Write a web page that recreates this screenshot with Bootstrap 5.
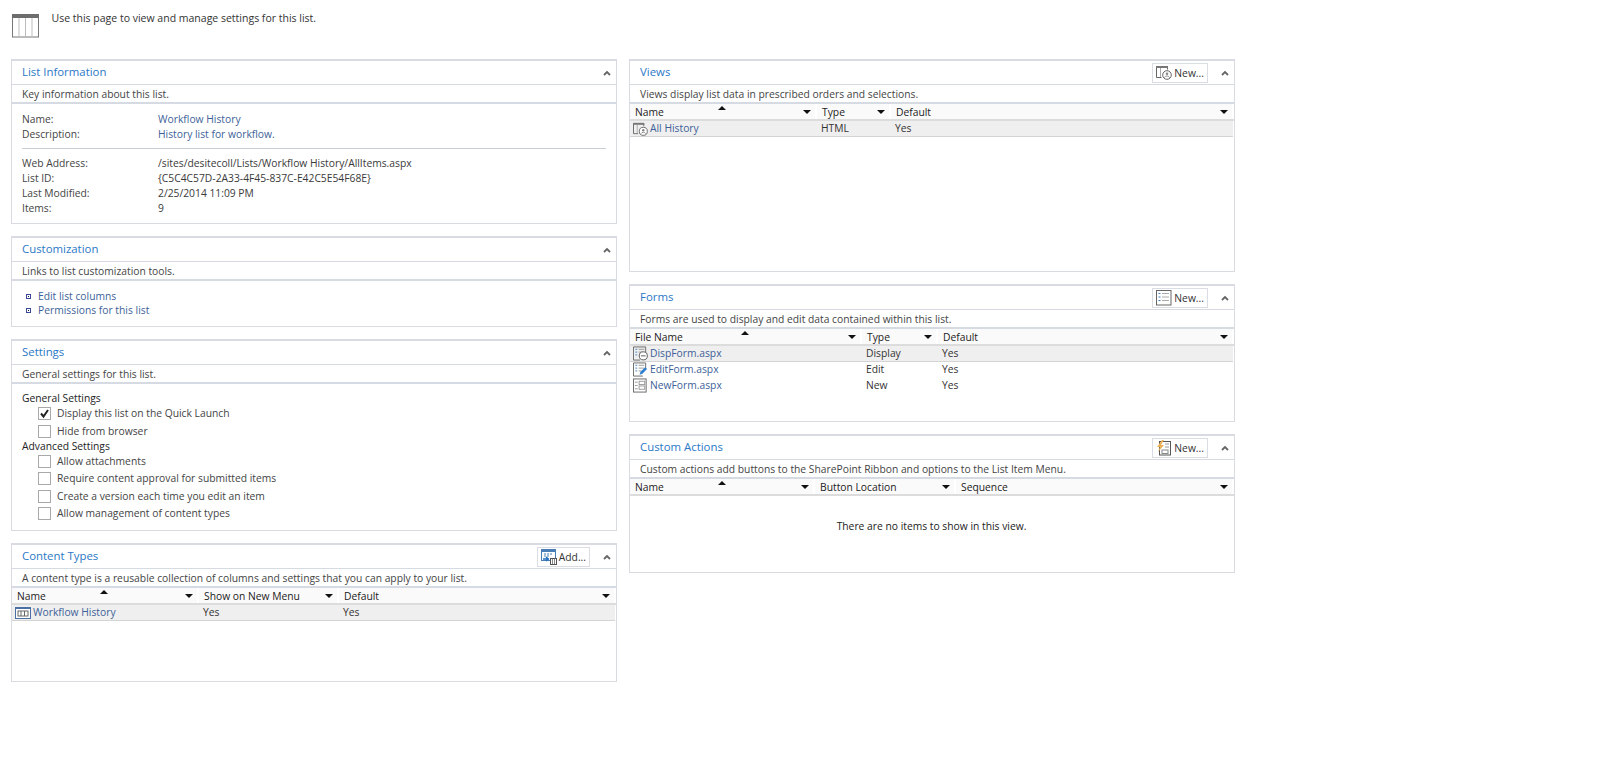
<!DOCTYPE html>
<html lang="en"><head><meta charset="utf-8"><title>List Settings</title>
<link rel="stylesheet" href="https://cdn.jsdelivr.net/npm/bootstrap@5.3.0/dist/css/bootstrap.min.css">
<style>
body{font-family:"Open Sans","Noto Sans",sans-serif;font-size:10.3px;color:#444;background:#fff;line-height:15px}
a{color:#3d5f98;text-decoration:none}
.page-wrap{width:1240px;padding:0 0 0 11px}
.intro{height:59px;padding-top:11px;gap:12.5px;padding-left:1px}
.intro p{margin:0;color:#333;font-size:10.5px;line-height:14px;width:280px}
.intro svg{flex:none;margin-top:3px}
.cols{gap:12px;align-items:flex-start}
.col-pane{width:606px;gap:12px}
.pane{border:1px solid #d8dbe1;border-top-width:2px;background:#fff}
.h-info{height:165px}.h-cust{height:91px}.h-set{height:192px}.h-ct{height:139px}
.h-views{height:213px}.h-forms{height:138px}.h-act{height:139px}
.pane-head{height:24px;border-bottom:1px solid #d5dae3;padding:0 5px 0 10px}
.pane-title{font-size:11.4px;color:#2a78c6;margin:0 0 2px;font-weight:400;line-height:20px}
.pane-desc{height:19px;border-bottom:2px solid #d5dae3;padding:2px 10px 0;line-height:14px;color:#444}
.new-btn{height:20px;border:1px solid #dadde3;background:#fff;padding:0 3px;font-size:10.3px;line-height:14px;color:#333;border-radius:0;margin-right:13px;gap:2px}
.chev{flex:none}
.dl-row{height:15px;padding:0 10px}
.dl-row span:first-child{width:136px;flex:none}
.dl-row span:last-child{color:#3a3a3a}
.dl-first{padding-top:7.5px}
.dl-first .dl-row{height:15.5px}
.dl-rule{border-top:1px solid #c9ced8;margin:5px 10px 7px}
.link-list{padding:8px 0 0 14px;margin:0;list-style:none}
.link-list li{height:14.5px;gap:7px}
.bullet{width:5px;height:5px;border:1px solid #3a4a9a;background:#fff;flex:none;position:relative}
.bullet::after{content:"";position:absolute;left:1px;top:1px;width:1px;height:1px;background:#223}
.set-wrap{padding:7px 10px 0}
.set-head{color:#222;height:14px;line-height:14px}
.set-head-tight{height:12.5px;line-height:12px}
.set-row{height:17.5px;padding-left:16px;gap:6px}
.cbox{width:13px;height:13px;border:1px solid #a9a9a9;background:#fff;flex:none}
.cbox svg{display:block}
.list-table{table-layout:fixed;margin:0;width:604px;font-size:10.3px;color:#333;--bs-table-bg:transparent}
.list-table th,.list-table td{padding:0 0 0 5px;border:0;height:16px;line-height:15px;vertical-align:middle}
.list-table th{font-weight:400;color:#222;background:#fbfafa;border-bottom:2px solid #dcdcdc;border-right:2px solid #fff;position:relative;height:16px;padding-top:1px;line-height:14px}
.list-table td:first-child{padding-left:3px}
.list-table tr.sel td{background:#efefef;border-bottom:1px solid #d4d4d4}
.list-table tr.plain td{background:#fff;border:0}
.down{position:absolute;right:4px;top:6px;width:0;height:0;border-left:4px solid transparent;border-right:4px solid transparent;border-top:4px solid #111}
.up{position:absolute;top:2px;width:0;height:0;border-left:4px solid transparent;border-right:4px solid transparent;border-bottom:4px solid #111}
.up-name{left:88px}.up-file{left:111px}
.cell-ic{gap:2px}
.cell-ic svg{flex:none}
.list-table tr.plain td.empty{padding:23px 0 0;color:#222;text-align:center}
</style></head><body>
<div class="page-wrap">
<div class="intro d-flex">
<svg width="27" height="24" viewBox="0 0 27 24"><rect x=".5" y=".5" width="26" height="22.500" fill="#fff" stroke="#777"/><rect x="0" y="0" width="27" height="4" fill="#6d6d6d"/><path d="M7 4v19M13.500 4v19M20 4v19" stroke="#bdbdbd"/></svg>
<p>Use this page to view and manage settings for this list.</p>
</div>
<div class="cols d-flex">
<div class="col-pane d-flex flex-column">

<section class="pane h-info">
<div class="pane-head d-flex align-items-center justify-content-between"><h2 class="pane-title">List Information</h2><svg class="chev" width="8" height="6" viewBox="0 0 8 6"><path d="M1 5l3-3 3 3" fill="none" stroke="#666" stroke-width="1.800"/></svg></div>
<div class="pane-desc">Key information about this list.</div>
<div class="dl-first">
<div class="dl-row d-flex"><span>Name:</span><span><a href="#">Workflow History</a></span></div>
<div class="dl-row d-flex"><span>Description:</span><span><a href="#">History list for workflow.</a></span></div>
</div>
<div class="dl-rule"></div>
<div class="dl-row d-flex"><span>Web Address:</span><span>/sites/desitecoll/Lists/Workflow History/AllItems.aspx</span></div>
<div class="dl-row d-flex"><span>List ID:</span><span>{C5C4C57D-2A33-4F45-837C-E42C5E54F68E}</span></div>
<div class="dl-row d-flex"><span>Last Modified:</span><span>2/25/2014 11:09 PM</span></div>
<div class="dl-row d-flex"><span>Items:</span><span>9</span></div>
</section>

<section class="pane h-cust">
<div class="pane-head d-flex align-items-center justify-content-between"><h2 class="pane-title">Customization</h2><svg class="chev" width="8" height="6" viewBox="0 0 8 6"><path d="M1 5l3-3 3 3" fill="none" stroke="#666" stroke-width="1.800"/></svg></div>
<div class="pane-desc">Links to list customization tools.</div>
<ul class="link-list">
<li class="d-flex align-items-center"><span class="bullet"></span><a href="#">Edit list columns</a></li>
<li class="d-flex align-items-center"><span class="bullet"></span><a href="#">Permissions for this list</a></li>
</ul>
</section>

<section class="pane h-set">
<div class="pane-head d-flex align-items-center justify-content-between"><h2 class="pane-title">Settings</h2><svg class="chev" width="8" height="6" viewBox="0 0 8 6"><path d="M1 5l3-3 3 3" fill="none" stroke="#666" stroke-width="1.800"/></svg></div>
<div class="pane-desc">General settings for this list.</div>
<div class="set-wrap">
<div class="set-head">General Settings</div>
<div class="set-row d-flex align-items-center"><span class="cbox"><svg width="11" height="11" viewBox="0 0 11 11"><path d="M2 5.500l2.500 3L9 2" fill="none" stroke="#222" stroke-width="2"/></svg></span><span>Display this list on the Quick Launch</span></div>
<div class="set-row d-flex align-items-center"><span class="cbox"></span><span>Hide from browser</span></div>
<div class="set-head set-head-tight">Advanced Settings</div>
<div class="set-row d-flex align-items-center"><span class="cbox"></span><span>Allow attachments</span></div>
<div class="set-row d-flex align-items-center"><span class="cbox"></span><span>Require content approval for submitted items</span></div>
<div class="set-row d-flex align-items-center"><span class="cbox"></span><span>Create a version each time you edit an item</span></div>
<div class="set-row d-flex align-items-center"><span class="cbox"></span><span>Allow management of content types</span></div>
</div>
</section>

<section class="pane h-ct">
<div class="pane-head d-flex align-items-center justify-content-between"><h2 class="pane-title">Content Types</h2>
<div class="d-flex align-items-center"><button type="button" class="btn new-btn d-flex align-items-center"><svg width="16" height="16" viewBox="0 0 16 16"><rect x=".5" y=".5" width="14" height="11" fill="#fff" stroke="#4a7fb5"/><rect y="0" width="15" height="3" fill="#4a7fb5"/><path d="M3 5h2M6 5h2M9 5h2M3 7h2M6 7h2" stroke="#4a7fb5"/><path d="M2 10h5M5 8l2.500 2L5 12" fill="none" stroke="#1f6fc0" stroke-width="1.300"/><rect x="9.500" y="9.500" width="6" height="6" fill="#fff" stroke="#555"/><path d="M11.500 10v5M13.500 10v5" stroke="#888"/></svg>Add...</button><svg class="chev" width="8" height="6" viewBox="0 0 8 6"><path d="M1 5l3-3 3 3" fill="none" stroke="#666" stroke-width="1.800"/></svg></div></div>
<div class="pane-desc">A content type is a reusable collection of columns and settings that you can apply to your list.</div>
<table class="table list-table"><colgroup><col width="186"><col width="140"><col></colgroup>
<thead><tr><th>Name<i class="up up-name"></i><i class="down"></i></th><th>Show on New Menu<i class="down"></i></th><th>Default<i class="down"></i></th></tr></thead>
<tbody><tr class="sel"><td><div class="cell-ic d-flex align-items-center"><svg width="16" height="14" viewBox="0 0 16 14"><rect x=".5" y="1.500" width="15" height="11" fill="#fff" stroke="#4a6fa5"/><rect y="1" width="16" height="2" fill="#4a6fa5"/><rect x="3" y="5" width="10" height="5" fill="#fff" stroke="#666"/><path d="M6 5v5M9.500 5v5" stroke="#666"/></svg><a href="#">Workflow History</a></div></td><td>Yes</td><td>Yes</td></tr></tbody>
</table>
</section>
</div>

<div class="col-pane d-flex flex-column">
<section class="pane h-views">
<div class="pane-head d-flex align-items-center justify-content-between"><h2 class="pane-title">Views</h2>
<div class="d-flex align-items-center"><button type="button" class="btn new-btn d-flex align-items-center"><svg width="16" height="15" viewBox="0 0 16 15"><path d="M.5 1.500h11v3M.5 1.500v11h5" fill="none" stroke="#666"/><rect y="1" width="12" height="2" fill="#777"/><path d="M4.500 3v9" stroke="#aaa"/><circle cx="11" cy="10" r="4.300" fill="#fff" stroke="#666"/><circle cx="11" cy="8.800" r="1.300" fill="#888"/><path d="M8.500 12.500c1-2 4-2 5 0" stroke="#888" fill="none"/></svg>New...</button><svg class="chev" width="8" height="6" viewBox="0 0 8 6"><path d="M1 5l3-3 3 3" fill="none" stroke="#666" stroke-width="1.800"/></svg></div></div>
<div class="pane-desc">Views display list data in prescribed orders and selections.</div>
<table class="table list-table"><colgroup><col width="186"><col width="74"><col></colgroup>
<thead><tr><th>Name<i class="up up-name"></i><i class="down"></i></th><th>Type<i class="down"></i></th><th>Default<i class="down"></i></th></tr></thead>
<tbody><tr class="sel"><td><div class="cell-ic d-flex align-items-center"><svg width="15" height="14" viewBox="0 0 16 15"><path d="M.5 1.500h11v3M.5 1.500v11h5" fill="none" stroke="#666"/><rect y="1" width="12" height="2" fill="#777"/><path d="M4.500 3v9" stroke="#aaa"/><circle cx="11" cy="10" r="4.300" fill="#fff" stroke="#666"/><circle cx="11" cy="8.800" r="1.300" fill="#888"/><path d="M8.500 12.500c1-2 4-2 5 0" stroke="#888" fill="none"/></svg><a href="#">All History</a></div></td><td>HTML</td><td>Yes</td></tr></tbody>
</table>
</section>

<section class="pane h-forms">
<div class="pane-head d-flex align-items-center justify-content-between"><h2 class="pane-title">Forms</h2>
<div class="d-flex align-items-center"><button type="button" class="btn new-btn d-flex align-items-center"><svg width="16" height="16" viewBox="0 0 16 16"><rect x=".5" y=".5" width="14.500" height="14.500" fill="#fff" stroke="#666"/><path d="M2.500 3.500h2M2.500 7h2M2.500 10.500h2" stroke="#3f7fc0"/><path d="M6 3.500h7M6 7h7M6 10.500h7" stroke="#aaa"/></svg>New...</button><svg class="chev" width="8" height="6" viewBox="0 0 8 6"><path d="M1 5l3-3 3 3" fill="none" stroke="#666" stroke-width="1.800"/></svg></div></div>
<div class="pane-desc">Forms are used to display and edit data contained within this list.</div>
<table class="table list-table"><colgroup><col width="231"><col width="76"><col></colgroup>
<thead><tr><th>File Name<i class="up up-file"></i><i class="down"></i></th><th>Type<i class="down"></i></th><th>Default<i class="down"></i></th></tr></thead>
<tbody>
<tr class="sel"><td><div class="cell-ic d-flex align-items-center"><svg width="15" height="15" viewBox="0 0 16 15"><path d="M.5.500h13v7M.5.500v14h7" fill="none" stroke="#666"/><path d="M2.500 3h2M2.500 6h2M2.500 9h2" stroke="#3f7fc0"/><path d="M6 3h6M6 6h4" stroke="#999"/><circle cx="11" cy="10" r="4.300" fill="#fff" stroke="#555"/><path d="M8.500 10h5" stroke="#555"/></svg><a href="#">DispForm.aspx</a></div></td><td>Display</td><td>Yes</td></tr>
<tr class="plain"><td><div class="cell-ic d-flex align-items-center"><svg width="15" height="15" viewBox="0 0 16 15"><path d="M.5.500h13v6M.5.500v14h10" fill="none" stroke="#666"/><path d="M2.500 3h2M2.500 6h2M2.500 9h2" stroke="#3f7fc0"/><path d="M6 3h6M6 6h6M6 9h3" stroke="#999"/><path d="M7 13l1-3 5-5 2 2-5 5z" fill="#2f7fd0"/></svg><a href="#">EditForm.aspx</a></div></td><td>Edit</td><td>Yes</td></tr>
<tr class="plain"><td><div class="cell-ic d-flex align-items-center"><svg width="15" height="15" viewBox="0 0 16 15"><rect x=".5" y=".5" width="13.500" height="14" fill="#fff" stroke="#666"/><path d="M2 4h3M2 7.500h3M2 11h3" stroke="#999"/><rect x="6.500" y="3" width="6" height="3.500" fill="#fff" stroke="#999"/><rect x="6.500" y="8" width="6" height="3.500" fill="#fff" stroke="#999"/></svg><a href="#">NewForm.aspx</a></div></td><td>New</td><td>Yes</td></tr>
</tbody>
</table>
</section>

<section class="pane h-act">
<div class="pane-head d-flex align-items-center justify-content-between"><h2 class="pane-title">Custom Actions</h2>
<div class="d-flex align-items-center"><button type="button" class="btn new-btn d-flex align-items-center"><svg width="16" height="16" viewBox="0 0 16 16"><rect x="3.500" y="1.500" width="11" height="13.500" fill="#fff" stroke="#555"/><path d="M9 4h4M9 7h4" stroke="#999"/><rect x="6" y="10" width="6" height="3.500" fill="#fff" stroke="#888"/><path d="M6 0L1 7h3L2 12l6-7H5l3-5z" fill="#eeb056"/></svg>New...</button><svg class="chev" width="8" height="6" viewBox="0 0 8 6"><path d="M1 5l3-3 3 3" fill="none" stroke="#666" stroke-width="1.800"/></svg></div></div>
<div class="pane-desc">Custom actions add buttons to the SharePoint Ribbon and options to the List Item Menu.</div>
<table class="table list-table"><colgroup><col width="184"><col width="141"><col></colgroup>
<thead><tr><th>Name<i class="up up-name"></i><i class="down"></i></th><th>Button Location<i class="down"></i></th><th>Sequence<i class="down"></i></th></tr></thead>
<tbody><tr class="plain"><td colspan="3" class="empty">There are no items to show in this view.</td></tr></tbody>
</table>
</section>
</div>
</div>
</div>
<script src="https://cdn.jsdelivr.net/npm/bootstrap@5.3.0/dist/js/bootstrap.bundle.min.js"></script>
</body></html>
